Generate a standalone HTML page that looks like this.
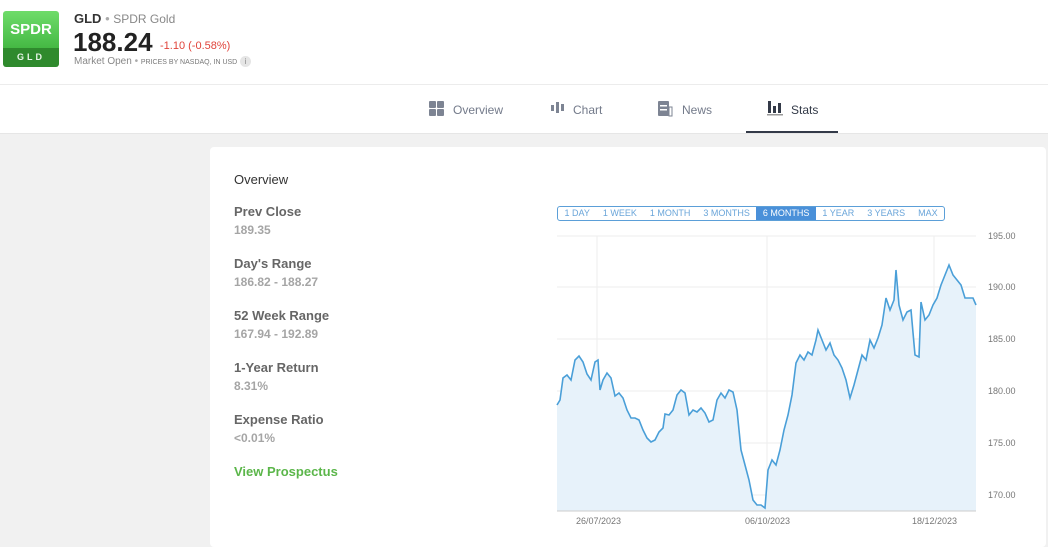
<!DOCTYPE html>
<html><head><style>
body{margin:0;width:1048px;height:528px;overflow:hidden;background:#f1f1f1;font-family:"Liberation Sans",sans-serif;position:relative}
.hdr{position:absolute;left:0;top:0;width:1048px;height:133px;background:#fff;border-bottom:1px solid #e6e6e6}
.line{position:absolute;left:0;top:84px;width:1048px;height:1px;background:#ececec}
.logo{position:absolute;left:3px;top:11px;width:56px;height:56px;border-radius:3px;overflow:hidden}
.logo .t{height:37px;background:linear-gradient(#6fdc6a,#45b944);color:#fff;font-weight:bold;font-size:15px;text-align:center;line-height:37px}
.logo .b{height:19px;background:#2f8a2d;color:#e8f5e8;font-size:9px;font-weight:bold;letter-spacing:3px;text-align:center;line-height:19px}
.a{position:absolute;white-space:nowrap}
.tab{position:absolute;top:103px;font-size:12px;color:#737a8a}
.card{position:absolute;left:210px;top:147px;width:836px;height:400px;background:#fff;border-radius:4px}
.lab{position:absolute;left:24px;font-size:13px;font-weight:bold;color:#666}
.val{position:absolute;left:24px;font-size:12px;font-weight:bold;color:#a5a5a5}
.rng{position:absolute;left:557px;top:206px;height:13px;border:1px solid #5b9fd8;border-radius:3px;display:flex;font-size:9px;color:#6aa5d9;line-height:13px}
.rng span{padding:0 6.5px}
.rng .on{background:#4a90d9;color:#fff}
</style></head><body>
<div class="hdr"></div><div class="line"></div>
<div class="logo"><div class="t">SPDR</div><div class="b">GLD</div></div>
<div class="a" style="left:74px;top:11px;font-size:13px;font-weight:bold;color:#333">GLD <span style="color:#aaa;font-weight:normal">•</span> <span style="color:#888;font-weight:normal;font-size:12px">SPDR Gold</span></div>
<div class="a" style="left:73px;top:27px;font-size:26px;font-weight:bold;color:#222">188.24</div>
<div class="a" style="left:160px;top:40px;font-size:11px;color:#e0433a">-1.10 (-0.58%)</div>
<div class="a" style="left:74px;top:56px;font-size:10px;color:#888">Market Open <span style="color:#aaa">•</span> <span style="font-size:7px;color:#777">PRICES BY NASDAQ, IN USD</span> <span style="display:inline-block;width:11px;height:11px;border-radius:50%;background:#e5e5e5;font-size:8px;text-align:center;line-height:11px;color:#888">i</span></div>
<svg class="a" style="left:429px;top:101px" width="16" height="16"><rect x="0" y="0" width="7" height="7" rx="1" fill="#7d8493"/><rect x="8" y="0" width="7" height="7" rx="1" fill="#7d8493"/><rect x="0" y="8" width="7" height="7" rx="1" fill="#7d8493"/><rect x="8" y="8" width="7" height="7" rx="1" fill="#7d8493"/></svg>
<div class="tab" style="left:453px">Overview</div>
<svg class="a" style="left:550px;top:101px" width="16" height="14"><rect x="1" y="4" width="3" height="6" fill="#7d8493"/><rect x="6" y="1" width="3" height="11" fill="#7d8493"/><rect x="11" y="3" width="3" height="7" fill="#7d8493"/></svg>
<div class="tab" style="left:573px">Chart</div>
<svg class="a" style="left:658px;top:101px" width="16" height="16"><rect x="0" y="0" width="11" height="15" rx="1" fill="#7d8493"/><rect x="11" y="6" width="3" height="9" fill="none" stroke="#7d8493"/><rect x="2" y="4" width="7" height="1.5" fill="#fff"/><rect x="2" y="8" width="7" height="1.5" fill="#fff"/></svg>
<div class="tab" style="left:682px">News</div>
<svg class="a" style="left:767px;top:101px" width="16" height="15"><rect x="1" y="0" width="3" height="12" fill="#333a48"/><rect x="6" y="5" width="3" height="7" fill="#333a48"/><rect x="11" y="2" width="3" height="10" fill="#333a48"/><rect x="0" y="13" width="16" height="1.5" fill="#999"/></svg>
<div class="tab" style="left:791px;color:#333a48">Stats</div>
<div class="a" style="left:746px;top:131px;width:92px;height:2px;background:#333a48"></div>
<div class="card">
<div class="a" style="left:24px;top:25px;font-size:13px;color:#333">Overview</div>
<div class="lab" style="top:57px">Prev Close</div><div class="val" style="top:76px">189.35</div>
<div class="lab" style="top:109px">Day's Range</div><div class="val" style="top:128px">186.82 - 188.27</div>
<div class="lab" style="top:161px">52 Week Range</div><div class="val" style="top:180px">167.94 - 192.89</div>
<div class="lab" style="top:213px">1-Year Return</div><div class="val" style="top:232px">8.31%</div>
<div class="lab" style="top:265px">Expense Ratio</div><div class="val" style="top:284px">&lt;0.01%</div>
<div class="lab" style="top:317px;color:#5bb64a">View Prospectus</div>
</div>
<div class="rng"><span>1 DAY</span><span>1 WEEK</span><span>1 MONTH</span><span>3 MONTHS</span><span class="on">6 MONTHS</span><span>1 YEAR</span><span>3 YEARS</span><span>MAX</span></div>
<svg class="a" style="left:0;top:0" width="1048" height="528">
<g stroke="#eee" stroke-width="1"><line x1="557" y1="236" x2="976" y2="236"/><line x1="557" y1="287" x2="976" y2="287"/><line x1="557" y1="339" x2="976" y2="339"/><line x1="557" y1="391" x2="976" y2="391"/><line x1="557" y1="443" x2="976" y2="443"/><line x1="557" y1="495" x2="976" y2="495"/><line x1="597" y1="236" x2="597" y2="511"/><line x1="767" y1="236" x2="767" y2="511"/><line x1="934" y1="236" x2="934" y2="511"/></g>
<polyline fill="#e7f2fa" stroke="none" points="557,511 557,405 560,400 563,378 567,375 571,380 575,360 579,356 583,362 587,374 591,380 595,362 598,360 600,390 603,380 607,373 611,378 615,396 619,393 623,398 627,410 631,418 635,418 639,420 643,430 647,438 651,442 655,440 659,432 663,428 665,414 669,415 673,410 677,395 681,390 685,393 689,415 693,410 697,412 701,408 705,413 709,422 713,420 717,400 721,393 725,398 729,390 733,392 737,410 741,450 745,465 749,480 753,500 757,505 761,505 765,508 768,470 772,460 776,465 780,450 784,430 788,415 792,395 796,363 800,355 804,360 808,352 812,355 816,340 818,330 822,340 826,350 830,343 834,355 838,360 842,368 846,380 850,398 854,385 858,370 862,355 866,360 870,340 874,348 878,338 882,325 886,298 890,310 894,300 896,270 899,305 903,320 907,312 911,310 915,355 919,357 921,302 925,320 929,315 933,305 937,298 941,285 945,275 949,265 953,275 957,280 961,285 965,298 969,298 973,298 976,305 976,511"/>
<polyline fill="none" stroke="#4a9fd8" stroke-width="1.6" points="557,405 560,400 563,378 567,375 571,380 575,360 579,356 583,362 587,374 591,380 595,362 598,360 600,390 603,380 607,373 611,378 615,396 619,393 623,398 627,410 631,418 635,418 639,420 643,430 647,438 651,442 655,440 659,432 663,428 665,414 669,415 673,410 677,395 681,390 685,393 689,415 693,410 697,412 701,408 705,413 709,422 713,420 717,400 721,393 725,398 729,390 733,392 737,410 741,450 745,465 749,480 753,500 757,505 761,505 765,508 768,470 772,460 776,465 780,450 784,430 788,415 792,395 796,363 800,355 804,360 808,352 812,355 816,340 818,330 822,340 826,350 830,343 834,355 838,360 842,368 846,380 850,398 854,385 858,370 862,355 866,360 870,340 874,348 878,338 882,325 886,298 890,310 894,300 896,270 899,305 903,320 907,312 911,310 915,355 919,357 921,302 925,320 929,315 933,305 937,298 941,285 945,275 949,265 953,275 957,280 961,285 965,298 969,298 973,298 976,305"/>
<line x1="557" y1="511" x2="976" y2="511" stroke="#ccc"/>
<g font-family="Liberation Sans" font-size="9" fill="#777"><text x="988" y="239">195.00</text><text x="988" y="290">190.00</text><text x="988" y="342">185.00</text><text x="988" y="394">180.00</text><text x="988" y="446">175.00</text><text x="988" y="498">170.00</text>
<text x="576" y="524">26/07/2023</text><text x="745" y="524">06/10/2023</text><text x="912" y="524">18/12/2023</text></g>
</svg>
</body></html>
